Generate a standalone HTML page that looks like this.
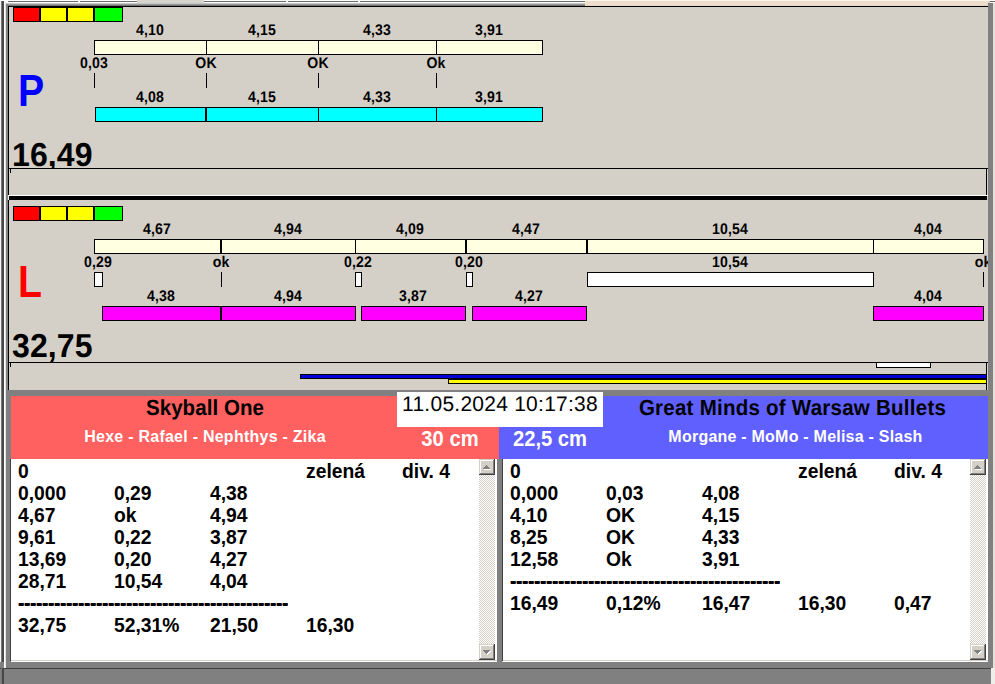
<!DOCTYPE html>
<html lang="cs"><head><meta charset="utf-8"><title>Results</title>
<style>
*{box-sizing:border-box;margin:0;padding:0}
html,body{width:995px;height:684px;overflow:hidden;background:#D4D0C8}
body{position:relative;font-family:"Liberation Sans",sans-serif;font-weight:bold;color:#000}
.a{position:absolute}
.k{position:absolute;background:#000}
.bar{position:absolute;height:15px;border:1px solid #000}
.v{position:absolute;width:80px;margin-left:-40px;text-align:center;font-size:15.4px;letter-spacing:0.16px;line-height:16px;white-space:nowrap;text-rendering:geometricPrecision;transform:scaleX(0.915);transform-origin:40px 0}
.big{position:absolute;font-size:33.2px;letter-spacing:0.1px;line-height:32px;white-space:nowrap;text-rendering:geometricPrecision;transform:scaleX(0.965);transform-origin:0 0}
.let{position:absolute;font-size:43.6px;line-height:43px;transform:scaleX(0.9);transform-origin:0 0}
.sq{position:absolute;height:15px;border:1px solid #000}
.hd{position:absolute;text-align:center;white-space:nowrap}
.row{position:absolute;left:0;height:22px;font-size:20px;line-height:22px;white-space:nowrap}
.row span{position:absolute;top:0;transform:scaleX(0.965);transform-origin:0 0}
.sb{position:absolute;width:16px;background:#fff conic-gradient(#fff 25%,#D4D0C8 0 50%,#fff 0 75%,#D4D0C8 0) 0 0/2px 2px}
.btn{position:absolute;left:0;width:16px;height:16px;background:#D4D0C8;box-shadow:inset -1px -1px 0 #404040,inset 1px 1px 0 #D4D0C8,inset -2px -2px 0 #808080,inset 2px 2px 0 #fff}
</style></head>
<body>
<div class="a" style="left:0px;top:0px;width:585px;height:4px;background:#fff;"></div>
<div class="a" style="left:8px;top:1px;width:70px;height:1px;background:#6a6a6a;"></div>
<div class="a" style="left:80px;top:1px;width:57px;height:1px;background:#6a6a6a;"></div>
<div class="a" style="left:204px;top:1px;width:82px;height:1px;background:#6a6a6a;"></div>
<div class="a" style="left:288px;top:1px;width:70px;height:1px;background:#6a6a6a;"></div>
<div class="a" style="left:360px;top:1px;width:225px;height:1px;background:#6a6a6a;"></div>
<div class="a" style="left:137px;top:0px;width:67px;height:4px;background:#D8D5CE;"></div>
<div class="a" style="left:6px;top:3px;width:579px;height:1px;background:#C4C4C4;"></div>
<div class="a" style="left:6px;top:4px;width:579px;height:1px;background:#9A9A9A;"></div>
<div class="a" style="left:6px;top:5px;width:579px;height:1px;background:#747474;"></div>
<div class="a" style="left:585px;top:0px;width:410px;height:1px;background:#FBF5EB;"></div>
<div class="a" style="left:585px;top:1px;width:403px;height:5px;background:#EFDDCB;"></div>
<div class="a" style="left:585px;top:5px;width:403px;height:1px;background:#E6D6C6;"></div>
<div class="a" style="left:0px;top:0px;width:1px;height:684px;background:#f4f4f4;"></div>
<div class="a" style="left:1px;top:1px;width:3px;height:683px;background:#484848;"></div>
<div class="a" style="left:1px;top:1px;width:1px;height:683px;background:#787878;"></div>
<div class="a" style="left:4px;top:2px;width:2px;height:666px;background:#fff;"></div>
<div class="a" style="left:5px;top:2px;width:1px;height:666px;background:#E4E4E4;"></div>
<div class="a" style="left:6px;top:4px;width:2px;height:386px;background:#848484;"></div>
<div class="a" style="left:988px;top:3px;width:5px;height:681px;background:#808080;"></div>
<div class="a" style="left:993px;top:0px;width:2px;height:668px;background:#E4E1DA;"></div>
<div class="a" style="left:990px;top:0px;width:5px;height:1px;background:#fff;"></div>
<div class="a" style="left:990px;top:1px;width:5px;height:1px;background:#706860;"></div>
<div class="a" style="left:990px;top:2px;width:5px;height:1px;background:#fff;"></div>
<div class="a" style="left:8px;top:6px;width:980px;height:1px;background:#000;"></div>
<div class="a" style="left:8px;top:6px;width:1px;height:190px;background:#000;"></div>
<!-- panel P -->
<div class="sq" style="left:13px;top:7px;width:27px;background:#FF0000"></div>
<div class="sq" style="left:40px;top:7px;width:27px;background:#FFFF00"></div>
<div class="sq" style="left:67px;top:7px;width:27px;background:#FFFF00"></div>
<div class="sq" style="left:94px;top:7px;width:29px;background:#00FF00"></div>
<div class="bar" style="left:94px;top:40px;width:449px;background:#FFFFE1"></div>
<div class="a" style="left:206px;top:40px;width:1px;height:15px;background:#000;"></div>
<div class="a" style="left:318px;top:40px;width:1px;height:15px;background:#000;"></div>
<div class="a" style="left:436px;top:40px;width:1px;height:15px;background:#000;"></div>
<div class="v" style="left:149.9px;top:23px">4,10</div>
<div class="v" style="left:261.9px;top:23px">4,15</div>
<div class="v" style="left:376.9px;top:23px">4,33</div>
<div class="v" style="left:488.9px;top:23px">3,91</div>
<div class="v" style="left:94.2px;top:56px">0,03</div>
<div class="a" style="left:94px;top:73px;width:1px;height:15px;background:#000;"></div>
<div class="v" style="left:206.2px;top:56px">OK</div>
<div class="a" style="left:206px;top:73px;width:1px;height:15px;background:#000;"></div>
<div class="v" style="left:318.2px;top:56px">OK</div>
<div class="a" style="left:318px;top:73px;width:1px;height:15px;background:#000;"></div>
<div class="v" style="left:436.2px;top:56px">Ok</div>
<div class="a" style="left:436px;top:73px;width:1px;height:15px;background:#000;"></div>
<div class="bar" style="left:95px;top:107px;width:111px;background:#00FFFF"></div>
<div class="v" style="left:149.9px;top:90px">4,08</div>
<div class="bar" style="left:206px;top:107px;width:113px;background:#00FFFF"></div>
<div class="v" style="left:261.9px;top:90px">4,15</div>
<div class="bar" style="left:318px;top:107px;width:119px;background:#00FFFF"></div>
<div class="v" style="left:376.9px;top:90px">4,33</div>
<div class="bar" style="left:436px;top:107px;width:107px;background:#00FFFF"></div>
<div class="v" style="left:488.9px;top:90px">3,91</div>
<div class="let" style="left:18px;top:69.5px;color:#0000FF">P</div>
<div class="big" style="left:11.5px;top:140px">16,49</div>
<div class="a" style="left:9px;top:169px;width:977px;height:26px;background:#D4D0C8;"></div>
<div class="a" style="left:8px;top:168px;width:980px;height:1px;background:#000;"></div>
<div class="a" style="left:986px;top:168px;width:1px;height:27px;background:#000;"></div>
<div class="a" style="left:10px;top:169px;width:1px;height:4px;background:#000;"></div>
<div class="a" style="left:8px;top:195px;width:980px;height:1px;background:#fff;"></div>
<div class="a" style="left:9px;top:196px;width:978px;height:4px;background:#000;"></div>
<div class="a" style="left:8px;top:196px;width:1px;height:4px;background:#F0F0F0;"></div>
<div class="a" style="left:8px;top:200px;width:1px;height:190px;background:#000;"></div>
<!-- panel L -->
<div class="sq" style="left:13px;top:206px;width:27px;background:#FF0000"></div>
<div class="sq" style="left:40px;top:206px;width:27px;background:#FFFF00"></div>
<div class="sq" style="left:67px;top:206px;width:27px;background:#FFFF00"></div>
<div class="sq" style="left:94px;top:206px;width:29px;background:#00FF00"></div>
<div class="bar" style="left:94px;top:239px;width:890px;background:#FFFFE1"></div>
<div class="a" style="left:220px;top:239px;width:2px;height:15px;background:#000;"></div>
<div class="a" style="left:355px;top:239px;width:1px;height:15px;background:#000;"></div>
<div class="a" style="left:465px;top:239px;width:2px;height:15px;background:#000;"></div>
<div class="a" style="left:586px;top:239px;width:2px;height:15px;background:#000;"></div>
<div class="a" style="left:873px;top:239px;width:1px;height:15px;background:#000;"></div>
<div class="v" style="left:157.4px;top:222px">4,67</div>
<div class="v" style="left:287.9px;top:222px">4,94</div>
<div class="v" style="left:410.4px;top:222px">4,09</div>
<div class="v" style="left:526.4px;top:222px">4,47</div>
<div class="v" style="left:729.9px;top:222px">10,54</div>
<div class="v" style="left:927.9px;top:222px">4,04</div>
<div class="v" style="left:98.2px;top:255px">0,29</div>
<div class="bar" style="left:94px;top:272px;width:9px;background:#fff"></div>
<div class="v" style="left:221.2px;top:255px">ok</div>
<div class="a" style="left:221px;top:272px;width:1px;height:15px;background:#000;"></div>
<div class="v" style="left:358.2px;top:255px">0,22</div>
<div class="bar" style="left:355px;top:272px;width:7px;background:#fff"></div>
<div class="v" style="left:469.2px;top:255px">0,20</div>
<div class="bar" style="left:466px;top:272px;width:7px;background:#fff"></div>
<div class="v" style="left:730.2px;top:255px">10,54</div>
<div class="bar" style="left:587px;top:272px;width:287px;background:#fff"></div>
<div class="v" style="left:983.2px;top:255px">ok</div>
<div class="a" style="left:983px;top:272px;width:1px;height:15px;background:#000;"></div>
<div class="bar" style="left:102px;top:306px;width:119px;background:#FF00FF"></div>
<div class="v" style="left:160.9px;top:289px">4,38</div>
<div class="bar" style="left:221px;top:306px;width:135px;background:#FF00FF"></div>
<div class="v" style="left:287.9px;top:289px">4,94</div>
<div class="bar" style="left:361px;top:306px;width:105px;background:#FF00FF"></div>
<div class="v" style="left:412.9px;top:289px">3,87</div>
<div class="bar" style="left:472px;top:306px;width:115px;background:#FF00FF"></div>
<div class="v" style="left:528.9px;top:289px">4,27</div>
<div class="bar" style="left:873px;top:306px;width:111px;background:#FF00FF"></div>
<div class="v" style="left:927.9px;top:289px">4,04</div>
<div class="let" style="left:18px;top:260.5px;color:#FF0000">L</div>
<div class="big" style="left:11.5px;top:331px">32,75</div>
<div class="a" style="left:8px;top:362px;width:980px;height:1px;background:#000;"></div>
<div class="a" style="left:986px;top:362px;width:1px;height:28px;background:#000;"></div>
<div class="a" style="left:10px;top:363px;width:1px;height:4px;background:#000;"></div>
<div class="a" style="left:876px;top:362px;width:55px;height:6px;background:#fff;border:1px solid #000"></div>
<div class="a" style="left:300px;top:374px;width:687px;height:5px;background:#0000D8;border:1px solid #000"></div>
<div class="a" style="left:448px;top:379px;width:539px;height:5px;background:#FFFF00;border:1px solid #000"></div>
<div class="a" style="left:988px;top:3px;width:5px;height:681px;background:#808080;"></div>
<div class="a" style="left:6px;top:390px;width:982px;height:6px;background:#808080;"></div>
<div class="a" style="left:6px;top:396px;width:5px;height:272px;background:#808080;"></div>
<div class="a" style="left:0px;top:662px;width:995px;height:22px;background:#808080;"></div>
<div class="a" style="left:0px;top:668px;width:991px;height:1px;background:#404040;"></div>
<div class="a" style="left:1px;top:668px;width:3px;height:16px;background:#484848;"></div>
<div class="a" style="left:1px;top:668px;width:1px;height:16px;background:#787878;"></div>
<div class="a" style="left:991px;top:668px;width:4px;height:16px;background:#F0EEE8;"></div>
<div class="a" style="left:993px;top:662px;width:2px;height:6px;background:#E4E1DA;"></div>
<div class="a" style="left:4px;top:662px;width:1px;height:6px;background:#fff;"></div>
<div class="a" style="left:5px;top:662px;width:1px;height:6px;background:#E4E4E4;"></div>
<div class="a" style="left:11px;top:396px;width:488px;height:63px;background:#FF6060;"></div>
<div class="a" style="left:499px;top:396px;width:489px;height:63px;background:#6060FF;"></div>
<div class="hd" style="left:12.3px;top:396px;width:386px;font-size:21.86px;letter-spacing:0.08px;text-rendering:geometricPrecision;transform:scaleX(0.9376);line-height:24px;color:#000">Skyball One</div>
<div class="hd" style="left:12px;top:428px;width:386px;font-size:16px;letter-spacing:0.25px;line-height:18px;color:#fff">Hexe - Rafael - Nephthys - Zika</div>
<div class="hd" style="left:601.2px;top:396px;width:383px;font-size:21.86px;letter-spacing:0.27px;text-rendering:geometricPrecision;transform:scaleX(0.9376);line-height:24px;color:#000">Great Minds of Warsaw Bullets</div>
<div class="hd" style="left:604px;top:428px;width:383px;font-size:16px;letter-spacing:0.23px;line-height:18px;color:#fff">Morgane - MoMo - Melisa - Slash</div>
<div class="hd" style="left:400px;top:428px;width:100px;font-size:21.5px;line-height:22px;color:#fff;transform:scaleX(0.94)">30 cm</div>
<div class="hd" style="left:500px;top:428px;width:100px;font-size:21.5px;line-height:22px;color:#fff;transform:scaleX(0.94)">22,5 cm</div>
<div class="hd" style="left:397px;top:392px;width:206px;height:35px;padding-top:1px;background:#fff;font-weight:normal;font-size:21px;letter-spacing:0.25px;line-height:23px;text-rendering:geometricPrecision;color:#000">11.05.2024 10:17:38</div>
<div class="a" style="left:11px;top:459px;width:486px;height:203px;background:#fff;overflow:hidden">
<div class="row" style="top:1px">
<span style="left:6.9px">0</span>
<span style="left:294.9px">zelená</span>
<span style="left:390.9px">div. 4</span>
</div>
<div class="row" style="top:23px">
<span style="left:6.9px">0,000</span>
<span style="left:102.9px">0,29</span>
<span style="left:198.9px">4,38</span>
</div>
<div class="row" style="top:45px">
<span style="left:6.9px">4,67</span>
<span style="left:102.9px">ok</span>
<span style="left:198.9px">4,94</span>
</div>
<div class="row" style="top:67px">
<span style="left:6.9px">9,61</span>
<span style="left:102.9px">0,22</span>
<span style="left:198.9px">3,87</span>
</div>
<div class="row" style="top:89px">
<span style="left:6.9px">13,69</span>
<span style="left:102.9px">0,20</span>
<span style="left:198.9px">4,27</span>
</div>
<div class="row" style="top:111px">
<span style="left:6.9px">28,71</span>
<span style="left:102.9px">10,54</span>
<span style="left:198.9px">4,04</span>
</div>
<div class="row" style="top:133px">
<span style="left:6.9px;letter-spacing:-0.44px;text-shadow:0 -1px 0 #000;clip-path:inset(11px 0 0 0)">---------------------------------------------</span>
</div>
<div class="row" style="top:155px">
<span style="left:6.9px">32,75</span>
<span style="left:102.9px">52,31%</span>
<span style="left:198.9px">21,50</span>
<span style="left:294.9px">16,30</span>
</div>
<div class="sb" style="left:468px;top:0;height:201px"><div class="btn" style="top:0"><svg class="a" style="left:4px;top:6px" width="8" height="5" viewBox="0 0 8 5" shape-rendering="crispEdges"><path d="M4 1h1v1h1v1h1v1h1v1h-7v-1h1v-1h1v-1h1z" fill="#fff"/><path d="M3 0h1v1h1v1h1v1h1v1h-7v-1h1v-1h1v-1h1z" fill="#808080"/></svg></div><div class="btn" style="top:185px"><svg class="a" style="left:4px;top:6px" width="8" height="5" viewBox="0 0 8 5" shape-rendering="crispEdges"><path d="M1 1h7v1h-1v1h-1v1h-1v1h-1v-1h-1v-1h-1v-1h-1z" fill="#fff"/><path d="M0 0h7v1h-1v1h-1v1h-1v1h-1v-1h-1v-1h-1v-1h-1z" fill="#808080"/></svg></div></div>
<div class="a" style="left:0;top:201px;width:486px;height:1px;background:#D4D0C8"></div>
</div>
<div class="a" style="left:10px;top:459px;width:1px;height:202px;background:#404040;"></div>
<div class="a" style="left:497px;top:459px;width:5px;height:203px;background:#808080;"></div>
<div class="a" style="left:502px;top:459px;width:1px;height:202px;background:#404040;"></div>
<div class="a" style="left:503px;top:459px;width:485px;height:203px;background:#fff;overflow:hidden">
<div class="row" style="top:1px">
<span style="left:7.1px">0</span>
<span style="left:295.1px">zelená</span>
<span style="left:391.1px">div. 4</span>
</div>
<div class="row" style="top:23px">
<span style="left:7.1px">0,000</span>
<span style="left:103.1px">0,03</span>
<span style="left:199.1px">4,08</span>
</div>
<div class="row" style="top:45px">
<span style="left:7.1px">4,10</span>
<span style="left:103.1px">OK</span>
<span style="left:199.1px">4,15</span>
</div>
<div class="row" style="top:67px">
<span style="left:7.1px">8,25</span>
<span style="left:103.1px">OK</span>
<span style="left:199.1px">4,33</span>
</div>
<div class="row" style="top:89px">
<span style="left:7.1px">12,58</span>
<span style="left:103.1px">Ok</span>
<span style="left:199.1px">3,91</span>
</div>
<div class="row" style="top:111px">
<span style="left:7.1px;letter-spacing:-0.44px;text-shadow:0 -1px 0 #000;clip-path:inset(11px 0 0 0)">---------------------------------------------</span>
</div>
<div class="row" style="top:133px">
<span style="left:7.1px">16,49</span>
<span style="left:103.1px">0,12%</span>
<span style="left:199.1px">16,47</span>
<span style="left:295.1px">16,30</span>
<span style="left:391.1px">0,47</span>
</div>
<div class="sb" style="left:467px;top:0;height:201px"><div class="btn" style="top:0"><svg class="a" style="left:4px;top:6px" width="8" height="5" viewBox="0 0 8 5" shape-rendering="crispEdges"><path d="M4 1h1v1h1v1h1v1h1v1h-7v-1h1v-1h1v-1h1z" fill="#fff"/><path d="M3 0h1v1h1v1h1v1h1v1h-7v-1h1v-1h1v-1h1z" fill="#808080"/></svg></div><div class="btn" style="top:185px"><svg class="a" style="left:4px;top:6px" width="8" height="5" viewBox="0 0 8 5" shape-rendering="crispEdges"><path d="M1 1h7v1h-1v1h-1v1h-1v1h-1v-1h-1v-1h-1v-1h-1z" fill="#fff"/><path d="M0 0h7v1h-1v1h-1v1h-1v1h-1v-1h-1v-1h-1v-1h-1z" fill="#808080"/></svg></div></div>
<div class="a" style="left:0;top:201px;width:485px;height:1px;background:#D4D0C8"></div>
</div>
</body></html>
